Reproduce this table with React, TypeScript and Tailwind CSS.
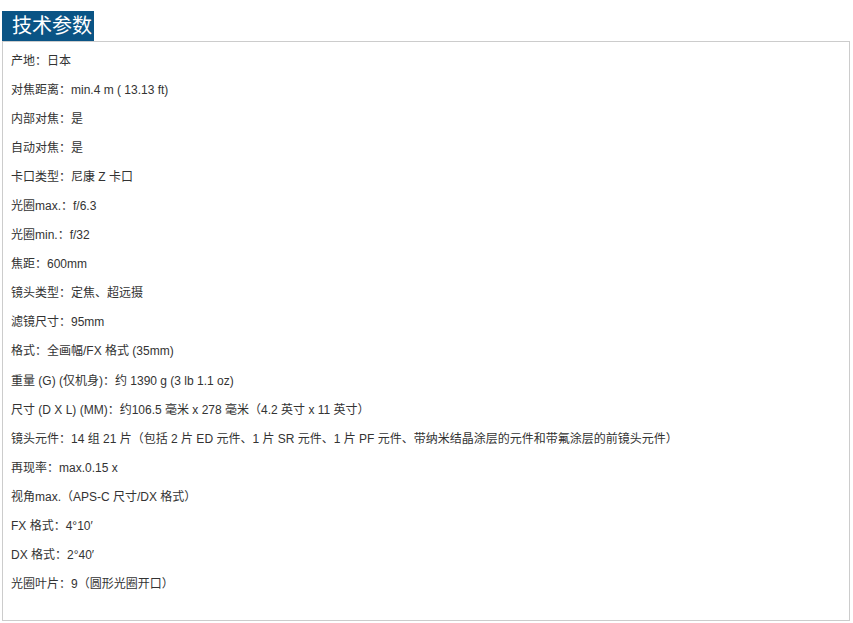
import React from "react";

const specs: string[] = [
  "产地：日本",
  "对焦距离：min.4 m ( 13.13 ft)",
  "内部对焦：是",
  "自动对焦：是",
  "卡口类型：尼康 Z 卡口",
  "光圈max.：f/6.3",
  "光圈min.：f/32",
  "焦距：600mm",
  "镜头类型：定焦、超远摄",
  "滤镜尺寸：95mm",
  "格式：全画幅/FX 格式 (35mm)",
  "重量 (G) (仅机身)：约 1390 g (3 lb 1.1 oz)",
  "尺寸 (D X L) (MM)：约106.5 毫米 x 278 毫米（4.2 英寸 x 11 英寸）",
  "镜头元件：14 组 21 片（包括 2 片 ED 元件、1 片 SR 元件、1 片 PF 元件、带纳米结晶涂层的元件和带氟涂层的前镜头元件）",
  "再现率：max.0.15 x",
  "视角max.（APS-C 尺寸/DX 格式）",
  "FX 格式：4°10′",
  "DX 格式：2°40′",
  "光圈叶片：9（圆形光圈开口）",
];

export default function App() {
  return (
    <div className="w-[853px] h-[623px] bg-white pt-[11px] pl-[2px] font-['Liberation_Sans','Noto_Sans_CJK_SC',sans-serif]">
      {/* tab header */}
      <div className="w-[92px] h-[30px] bg-[#0a5485] text-white text-[20px] leading-[30px] pl-[10px]">
        技术参数
      </div>
      <div className="w-[848px] h-[580px] border border-[#cccccc] pt-[4px]">
        {specs.map((s, i) => (
          <div key={i} className="h-[29.1px] flex items-center pl-[8px] text-[12px] text-[#333333] whitespace-nowrap">
            {s}
          </div>
        ))}
      </div>
    </div>
  );
}
